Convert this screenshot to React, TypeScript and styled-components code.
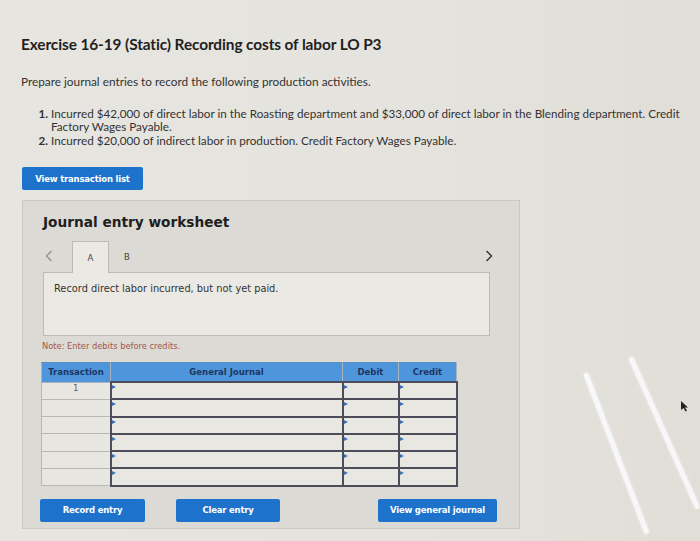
import React from "react";
import styled, { createGlobalStyle } from "styled-components";

const Global = createGlobalStyle`
  html, body { margin: 0; padding: 0; background: #e6e4de; }
  #root { width: 700px; height: 541px; overflow: hidden; position: relative; }
`;

const Page = styled.div`
  width: 700px;
  height: 541px;
  box-sizing: border-box;
  padding: 34px 0 0 21px;
  background: linear-gradient(90deg, #e7e5df 0%, #e5e3dd 60%, #e0ded7 100%);
  font-family: Lato, "Open Sans", sans-serif;
  color: #2a2a2a;
  position: relative;
`;

const Title = styled.h1`
  margin: 0;
  font-size: 15.4px;
  line-height: 20px;
  font-weight: 700;
  color: #1f1f1f;
  letter-spacing: -0.1px;
`;

const Intro = styled.p`
  margin: 20px 0 0;
  font-size: 11.8px;
  line-height: 16px;
  color: #333;
`;

const Steps = styled.ol`
  margin: 17px 0 0;
  padding-left: 30px;
  padding-right: 4px;
  font-size: 11.7px;
  line-height: 13px;
  color: #333;
  li::marker { font-weight: 700; }
  li + li { margin-top: 1px; }
`;

const BlueButton = styled.button<{ $w: number }>`
  width: ${(p) => p.$w}px;
  height: 23px;
  border: none;
  border-radius: 2px;
  background: #1d73cc;
  color: #fff;
  font-family: "DejaVu Sans", Verdana, sans-serif;
  font-weight: 700;
  font-size: 8.5px;
  letter-spacing: -0.2px;
  padding: 0;
  cursor: pointer;
`;

const TopButton = styled(BlueButton)`
  margin: 20px 0 0 1px;
`;

const Panel = styled.section`
  margin-top: 10px;
  margin-left: 1px;
  width: 498px;
  height: 329px;
  box-sizing: border-box;
  padding: 13px 0 0 20px;
  background: #dcdad4;
  border: 1px solid #cac8c2;
  font-family: "DejaVu Sans", Verdana, sans-serif;
`;

const Heading = styled.h2`
  margin: 0;
  font-size: 13.7px;
  line-height: 16px;
  font-weight: 700;
  color: #1e1e1e;
`;

const TabRow = styled.div`
  margin-top: 10px;
  width: 447px;
  height: 32px;
  display: flex;
  align-items: flex-end;
`;

const Chevron = styled.span`
  align-self: center;
  display: flex;
  align-items: center;
`;

const PrevChevron = styled(Chevron)`
  width: 29px;
  padding-left: 2px;
  box-sizing: border-box;
`;

const NextChevron = styled(Chevron)`
  margin-right: -3px;
`;

const Tab = styled.div<{ $active?: boolean }>`
  width: ${(p) => (p.$active ? 37 : 36)}px;
  height: 32px;
  box-sizing: border-box;
  display: flex;
  align-items: center;
  justify-content: center;
  font-size: 8.5px;
  color: #444;
  background: ${(p) => (p.$active ? "#ebe9e3" : "transparent")};
  border: ${(p) => (p.$active ? "1px solid #bdbbb5" : "1px solid transparent")};
  border-bottom: none;
  margin-bottom: ${(p) => (p.$active ? "-1px" : "0")};
  position: relative;
  z-index: 1;
`;

const Spacer = styled.div`
  flex: 1;
`;

const Description = styled.div`
  width: 447px;
  height: 64px;
  box-sizing: border-box;
  padding: 10px 10px;
  background: #ebe9e3;
  border: 1px solid #bdbbb5;
  font-size: 9.8px;
  line-height: 12px;
  color: #333;
`;

const Note = styled.p`
  margin: 5px 0 0 -1px;
  font-size: 8.3px;
  line-height: 10px;
  color: #a3574d;
`;

const Table = styled.table`
  margin: 11px 0 0 -2px;
  width: 411px;
  border-collapse: collapse;
  table-layout: fixed;
`;

const Th = styled.th<{ $w: number }>`
  width: ${(p) => p.$w}px;
  height: 18px;
  padding: 0;
  background: #4f95dc;
  color: #1c3563;
  font-size: 8.5px;
  font-weight: 700;
  border: 1px solid #a9b4be;
  border-top: 1px solid #5f8fc0;
`;

const Row = styled.tr`
  height: 17.3px;
`;

const TxCell = styled.td`
  padding: 0;
  background: #e8e6e0;
  border: 1px solid #b9b7b1;
  font-size: 8px;
  color: #555;
  text-align: center;
  vertical-align: top;
  line-height: 11px;
`;

const InputCell = styled.td`
  padding: 0;
  background: #e9e7e1;
  border: 2px solid #4c4d58;
  position: relative;
  &::before {
    content: "";
    position: absolute;
    left: 0;
    top: 2px;
    border-left: 4px solid #3d6fb5;
    border-top: 2px solid transparent;
    border-bottom: 2px solid transparent;
  }
`;

const ActionRow = styled.div`
  margin: 12px 0 0 -3px;
  display: flex;
  width: 457px;
`;

const ClearButton = styled(BlueButton)`
  margin-left: 31px;
`;

const Glare = styled.div<{ $x: number; $y: number; $len: number; $angle: number }>`
  position: absolute;
  left: ${(p) => p.$x}px;
  top: ${(p) => p.$y}px;
  width: 5px;
  height: ${(p) => p.$len}px;
  border-radius: 3px;
  background: rgba(250, 252, 255, 0.85);
  box-shadow: 0 0 3px rgba(255, 255, 255, 0.7);
  transform-origin: top center;
  transform: rotate(${(p) => p.$angle}deg);
  pointer-events: none;
`;

const Cursor = styled.svg`
  position: absolute;
  left: 681px;
  top: 401px;
`;

const rows = [0, 1, 2, 3, 4, 5];

export default function App() {
  return (
    <>
      <Global />
      <Page>
        <Title>Exercise 16-19 (Static) Recording costs of labor LO P3</Title>
        <Intro>Prepare journal entries to record the following production activities.</Intro>
        <Steps>
          <li>
            Incurred $42,000 of direct labor in the Roasting department and $33,000 of direct labor in the
            Blending department. Credit Factory Wages Payable.
          </li>
          <li>Incurred $20,000 of indirect labor in production. Credit Factory Wages Payable.</li>
        </Steps>
        <TopButton $w={121}>View transaction list</TopButton>
        <Panel>
          <Heading>Journal entry worksheet</Heading>
          <TabRow>
            <PrevChevron>
              <svg width="8" height="12" viewBox="0 0 8 12">
                <path d="M6.5 1 L1.5 6 L6.5 11" fill="none" stroke="#8f8e8a" strokeWidth="1.3" />
              </svg>
            </PrevChevron>
            <Tab $active>A</Tab>
            <Tab>B</Tab>
            <Spacer />
            <NextChevron>
              <svg width="8" height="12" viewBox="0 0 8 12">
                <path d="M1.5 1 L6.5 6 L1.5 11" fill="none" stroke="#3a3a3a" strokeWidth="1.5" />
              </svg>
            </NextChevron>
          </TabRow>
          <Description>Record direct labor incurred, but not yet paid.</Description>
          <Note>Note: Enter debits before credits.</Note>
          <Table>
            <thead>
              <tr>
                <Th $w={68}>Transaction</Th>
                <Th $w={231}>General Journal</Th>
                <Th $w={55}>Debit</Th>
                <Th $w={57}>Credit</Th>
              </tr>
            </thead>
            <tbody>
              {rows.map((r) => (
                <Row key={r}>
                  <TxCell>{r === 0 ? "1" : ""}</TxCell>
                  <InputCell />
                  <InputCell />
                  <InputCell />
                </Row>
              ))}
            </tbody>
          </Table>
          <ActionRow>
            <BlueButton $w={105}>Record entry</BlueButton>
            <ClearButton $w={104}>Clear entry</ClearButton>
            <Spacer />
            <BlueButton $w={119}>View general journal</BlueButton>
          </ActionRow>
        </Panel>
        <Glare $x={583} $y={373} $len={172} $angle={-21} />
        <Glare $x={628} $y={357} $len={166} $angle={-24} />
        <Cursor width="8" height="11" viewBox="0 0 8 11">
          <path d="M0 0 L0 9 L2.5 7 L4.5 10.5 L6 9.8 L4 6.5 L7 6.5 Z" fill="#222" />
        </Cursor>
      </Page>
    </>
  );
}
